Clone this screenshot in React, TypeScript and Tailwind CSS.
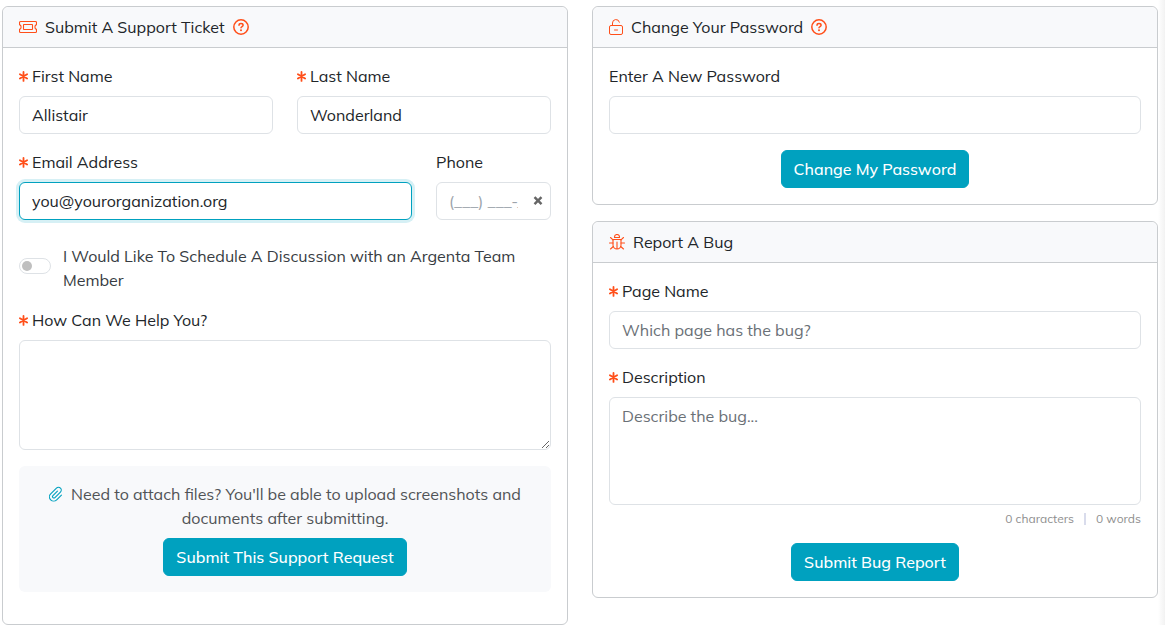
import React, { useState } from "react";

const orange = "text-[#ff4f1a]";

const controlBase =
  "w-full rounded-md border bg-white px-3 text-base leading-6 text-[#212529] outline-none placeholder:text-[#6a7076] focus:border-[#00a1bf] focus:ring-3 focus:ring-[#d6f0f5]";
const control = controlBase + " border-[#dee2e6]";
const controlActive = controlBase + " border-[#00a1bf] ring-3 ring-[#d6f0f5]";

function TicketIcon() {
  return (
    <svg className="h-4 w-[18px] shrink-0" viewBox="0 0 18 16" fill="none" stroke="currentColor" strokeWidth="1.1" aria-hidden="true">
      <path d="M.5 3.5a1 1 0 0 1 1-1h15a1 1 0 0 1 1 1v2.1c-1 .3-1.6 1.300-1.600 2.400s.6 2.100 1.600 2.400v2.100a1 1 0 0 1-1 1h-15a1 1 0 0 1-1-1v-2.100c1-.3 1.600-1.300 1.600-2.400s-.6-2.100-1.600-2.400z" />
      <rect x="4.5" y="5.5" width="9" height="5" rx=".4" />
    </svg>
  );
}

function UnlockIcon() {
  return (
    <svg className="h-4 w-3.5 shrink-0" viewBox="0 0 14 16" fill="none" stroke="currentColor" aria-hidden="true">
      <rect x=".5" y="6.5" width="13" height="9" rx="1.5" />
      <path d="M3.5 6.5V4a3.5 3.5 0 0 1 6.9-.8M5.5 11h3" strokeLinecap="round" />
    </svg>
  );
}

function BugIcon() {
  return (
    <svg className="size-4 shrink-0" viewBox="0 0 16 16" fill="none" stroke="currentColor" strokeWidth="1.1" strokeLinecap="round" strokeLinejoin="round" aria-hidden="true">
      <path d="M5.5 3.5V3a2.5 2.5 0 0 1 5 0v.5z" />
      <path d="M4 5.5h8v5.500a4 4 0 0 1-8 0zM8 8v7" />
      <path d="M.5 9H4M12 9h3.500M4 5.800L1.500 3.500M12 5.800l2.500-2.300M4.300 12.500l-2.800 2.500M11.700 12.500l2.800 2.500" />
    </svg>
  );
}

function HelpIcon() {
  return (
    <svg className="size-4" viewBox="0 0 16 16" fill="none" stroke="currentColor" aria-hidden="true">
      <circle cx="8" cy="8" r="7.2" strokeWidth="1.5" />
      <path d="M6 6.300c0-1.100.8-1.700 2-1.700s2.100.6 2.100 1.700c0 1.200-2.100 1.300-2.100 2.500" strokeWidth="1.500" strokeLinecap="round" />
      <circle cx="8" cy="11.300" r="1" fill="currentColor" stroke="none" />
    </svg>
  );
}

function ClipIcon() {
  return (
    <svg className="mr-2 inline-block h-4 w-3.5 align-[-2px] text-[#00a1bf]" viewBox="0 0 448 512" fill="none" stroke="currentColor" strokeWidth="36" strokeLinecap="round" aria-hidden="true">
      <path d="M398 290l-152 152c-53 53-139 53-192 0s-53-139 0-192l184-184c35-35 93-35 128 0s35 93 0 128l-176 176c-18 18-46 18-64 0s-18-46 0-64l144-144" />
    </svg>
  );
}

function Asterisk() {
  return (
    <svg className={"mr-1 h-[11px] w-[9px] shrink-0 " + orange} viewBox="0 0 9 11" stroke="currentColor" strokeWidth="1.8" strokeLinecap="round" aria-hidden="true">
      <path d="M4.500 .9v9M.9 3.200l7.200 4.400M8.100 3.200L.9 7.600" />
    </svg>
  );
}

function Label({ htmlFor, required, children }: { htmlFor: string; required?: boolean; children: React.ReactNode }) {
  return (
    <label htmlFor={htmlFor} className="mb-2 flex items-center whitespace-nowrap leading-6">
      {required && <Asterisk />}
      {children}
    </label>
  );
}

function Card({
  title,
  icon,
  help,
  children,
}: {
  title: string;
  icon: React.ReactNode;
  help?: boolean;
  children: React.ReactNode;
}) {
  return (
    <section className="rounded-md border border-[#c9cccf] bg-white">
      <header className="flex items-center gap-2 rounded-t-md border-b border-[#c9cccf] bg-[#f8f9fb] px-4 py-2 leading-6">
        <span className={orange}>{icon}</span>
        <h2>{title}</h2>
        {help && (
          <button type="button" aria-label={"Help: " + title} className={orange}>
            <HelpIcon />
          </button>
        )}
      </header>
      {children}
    </section>
  );
}

function PrimaryButton({ children }: { children: React.ReactNode }) {
  return (
    <button type="submit" className="rounded-md border border-[#00a1bf] bg-[#00a1bf] px-3 py-1.5 text-base leading-6 font-medium text-white">
      {children}
    </button>
  );
}

export default function App() {
  const [phone, setPhone] = useState("(___) ___-____");
  const [bug, setBug] = useState("");
  const words = bug.trim() ? bug.trim().split(/\s+/).length : 0;
  const stop = (e: React.FormEvent) => e.preventDefault();

  return (
    <main className="flex bg-white font-['Mulish','Open_Sans',sans-serif] text-base text-[#212529]">
      <div className="grid flex-1 grid-cols-2 items-start gap-6 pt-1.5 pl-0.5">
        <Card title="Submit A Support Ticket" icon={<TicketIcon />} help>
          <form onSubmit={stop} className="px-4 pt-4 pb-8">
            <div className="grid grid-cols-2 gap-6">
              <div>
                <Label htmlFor="first" required>First Name</Label>
                <input id="first" className={control + " h-[38px]"} defaultValue="Allistair" />
              </div>
              <div>
                <Label htmlFor="last" required>Last Name</Label>
                <input id="last" className={control + " h-[38px]"} defaultValue="Wonderland" />
              </div>
            </div>
            <div className="mt-4 flex gap-6">
              <div className="flex-1">
                <Label htmlFor="email" required>Email Address</Label>
                <input id="email" type="email" className={controlActive + " h-[38px]"} defaultValue="you@yourorganization.org" />
              </div>
              <div className="w-[115px]">
                <Label htmlFor="phone">Phone</Label>
                <div className="flex h-[38px] items-center rounded-md border border-[#dee2e6] pr-1.5 pl-3">
                  <input id="phone" type="tel" className="min-w-0 flex-1 text-[#9ba3ab] outline-none" value={phone} onChange={(e) => setPhone(e.target.value)} />
                  <button type="button" aria-label="Clear phone" onClick={() => setPhone("")} className="ml-3.5 text-[#666666]">
                    <svg className="size-3" viewBox="0 0 12 12" stroke="currentColor" strokeWidth="2.4" aria-hidden="true">
                      <path d="M2.500 2.200l7 7M9.500 2.200l-7 7" />
                    </svg>
                  </button>
                </div>
              </div>
            </div>
            <div className="mt-6 flex items-start gap-3">
              <input
                id="schedule"
                type="checkbox"
                role="switch"
                className="mt-3.5 h-4 w-8 shrink-0 appearance-none rounded-full border border-[#dee2e6] bg-white p-0.5 before:block before:size-2.5 before:rounded-full before:bg-[#bfbfbf] checked:bg-[#00a1bf] checked:before:translate-x-4"
              />
              <label htmlFor="schedule" className="leading-6 text-[#373c42]">
                I Would Like To Schedule A Discussion with an Argenta Team Member
              </label>
            </div>
            <div className="mt-4">
              <Label htmlFor="help" required>How Can We Help You?</Label>
              <textarea id="help" className={control + " block h-[110px] resize-y py-1.5"} />
            </div>
            <div className="mt-4 rounded-md bg-[#f8f9fb] p-4 text-center">
              <p className="mb-2 leading-6 text-[#505356]">
                <ClipIcon />
                Need to attach files? You'll be able to upload screenshots and documents after submitting.
              </p>
              <PrimaryButton>Submit This Support Request</PrimaryButton>
            </div>
          </form>
        </Card>

        <div className="flex flex-col gap-4">
          <Card title="Change Your Password" icon={<UnlockIcon />} help>
            <form onSubmit={stop} className="p-4">
              <Label htmlFor="password">Enter A New Password</Label>
              <input id="password" type="password" className={control + " block h-[38px]"} />
              <div className="mt-4 flex justify-center">
                <PrimaryButton>Change My Password</PrimaryButton>
              </div>
            </form>
          </Card>
          <Card title="Report A Bug" icon={<BugIcon />}>
            <form onSubmit={stop} className="p-4">
              <Label htmlFor="page" required>Page Name</Label>
              <input id="page" className={control + " block h-[38px]"} placeholder="Which page has the bug?" />
              <div className="mt-4">
                <Label htmlFor="description" required>Description</Label>
                <textarea
                  id="description"
                  className={control + " block h-[108px] resize-none py-1.5"}
                  placeholder="Describe the bug..."
                  value={bug}
                  onChange={(e) => setBug(e.target.value)}
                />
              </div>
              <div className="mt-1 flex items-center justify-end gap-2.5 text-xs leading-5 text-[#8f8f8f]">
                <span>{bug.length} characters</span>
                <span className="h-3 w-0.5 bg-[#d9dcec]" />
                <span>{words} words</span>
              </div>
              <div className="mt-3.5 flex justify-center">
                <PrimaryButton>Submit Bug Report</PrimaryButton>
              </div>
            </form>
          </Card>
        </div>
      </div>
      <div className="w-[7px] bg-linear-to-r from-white to-[#f2f2f2]" />
    </main>
  );
}
